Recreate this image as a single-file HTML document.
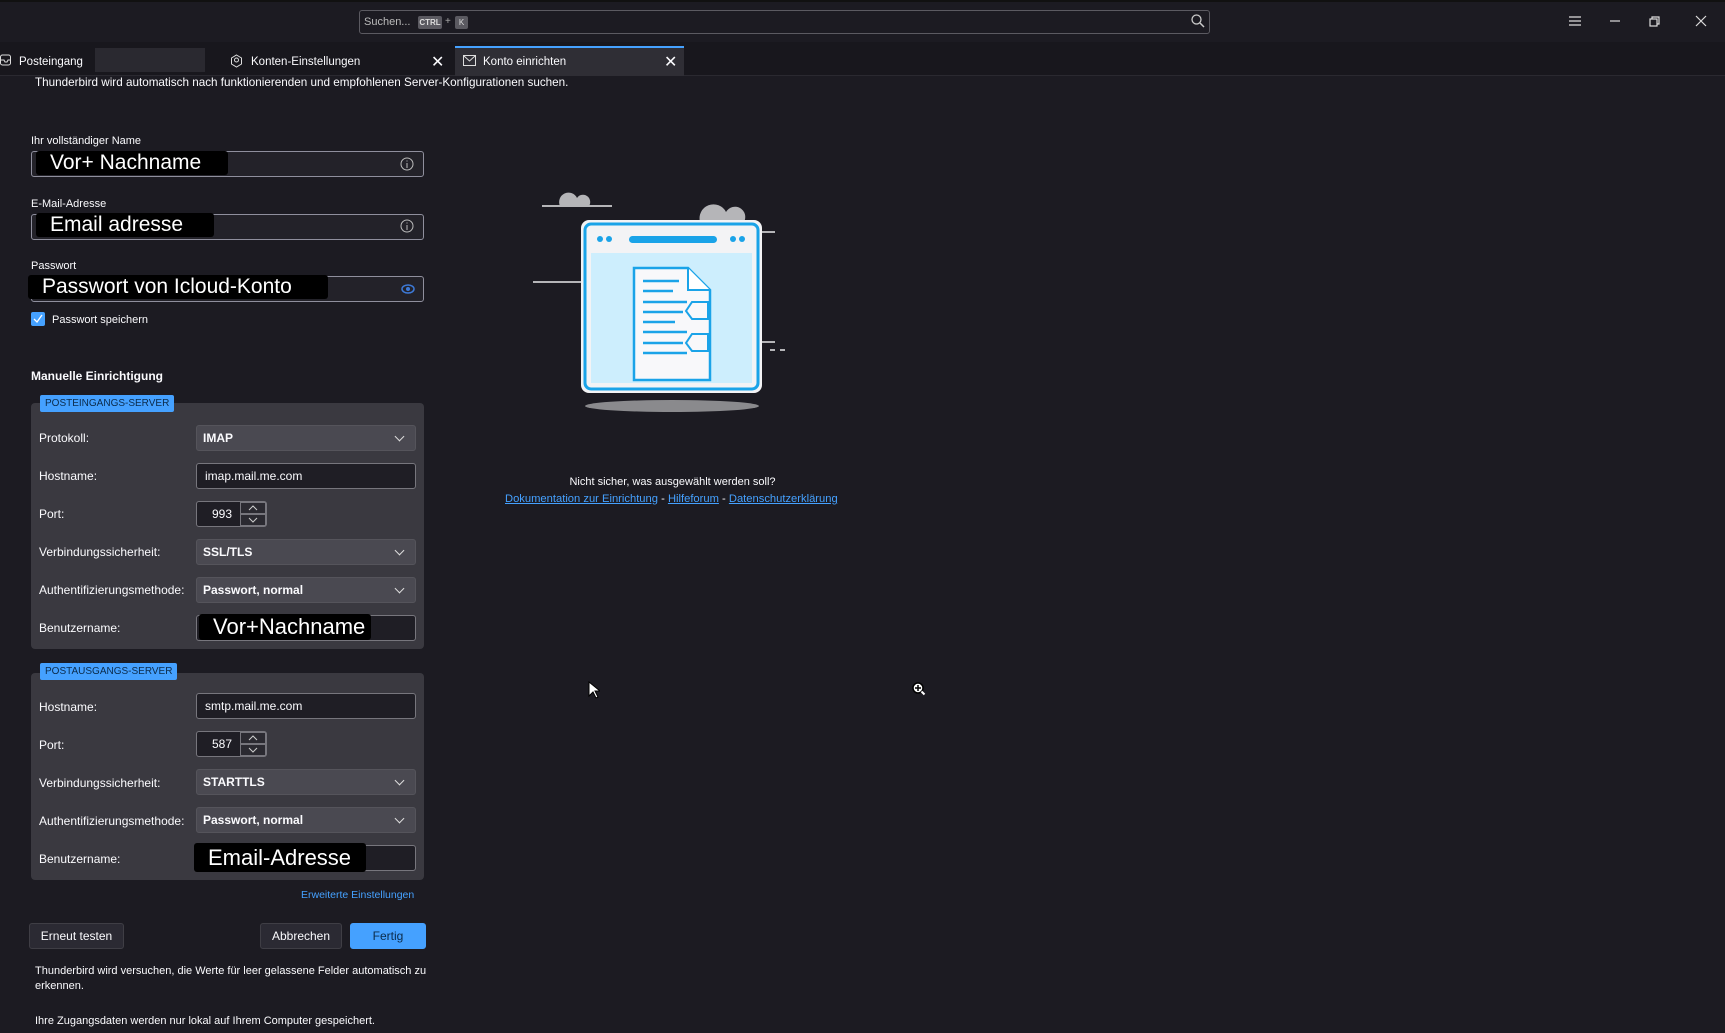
<!DOCTYPE html>
<html><head><meta charset="utf-8"><style>
*{box-sizing:border-box;margin:0;padding:0}
body{width:1725px;height:1033px;background:#1c1b22;color:#fbfbfe;font-family:"Liberation Sans",sans-serif;font-size:12px;position:relative;overflow:hidden}
.a{position:absolute;white-space:nowrap}
.title{left:0;top:0;width:1725px;height:42px;background:#1c1b22;border-top:2px solid #111}
.tabs{left:0;top:42px;width:1725px;height:34px;background:#18171d;border-bottom:1px solid #2a2930}
.lbl{font-size:11px;color:#fbfbfe}
.inp{background:#232229;border:1px solid #8f8f9d;border-radius:3px;height:26px}
.blk{background:#000;color:#fff;font-size:21px;border-radius:3px;padding:0 14px;height:24px;line-height:24px}
.panel{background:#3a3940;border-radius:4px;left:31px;width:393px}
.badge{background:#45a1ff;color:#0b2b4a;font-size:10px;border-radius:2px;height:17px;line-height:17px;padding:0 5px}
.rl{left:39px;font-size:12px;color:#fbfbfe}
.sel{left:196px;width:220px;height:26px;background:#4a4951;border:1px solid #55545b;border-radius:3px;font-size:12px;font-weight:bold;line-height:24px;padding-left:6px}
.sel:after{content:"";position:absolute;right:12px;top:7px;width:6px;height:6px;border-right:1.5px solid #ddd;border-bottom:1.5px solid #ddd;transform:rotate(45deg)}
.tx{left:196px;width:220px;height:26px;background:#1f1e25;border:1px solid #77767d;border-radius:3px;line-height:24px;padding-left:8px;font-size:12px}
.port{left:196px;width:71px;height:26px;background:#1f1e25;border:1px solid #77767d;border-radius:3px;line-height:24px;font-size:12px}
.port span{position:absolute;right:34px}
.port svg{position:absolute;right:0;top:0}
.btn{height:26px;border-radius:3px;background:#2b2a33;border:1px solid #3f3e45;text-align:center;line-height:24px;font-size:12px}
a{color:#45a1ff;text-decoration:underline}
</style></head><body>
<div class="a title"></div>
<div class="a" style="left:359px;top:10px;width:851px;height:24px;border:1px solid #5b5a61;border-radius:3px;background:#1c1b22"></div>
<div class="a" style="left:364px;top:16px;font-size:11px;color:#bbb">Suchen...</div>
<div class="a" style="left:418px;top:16px;width:24px;height:13px;background:#5b5a61;border-radius:2px;font-size:8px;line-height:13px;text-align:center;font-weight:bold;color:#ddd">CTRL</div>
<div class="a" style="left:445px;top:16px;font-size:10px;color:#aaa">+</div>
<div class="a" style="left:455px;top:16px;width:13px;height:13px;background:#5b5a61;border-radius:2px;font-size:8px;line-height:13px;text-align:center;color:#ddd">K</div>
<svg class="a" style="left:1190px;top:13px" width="16" height="16"><circle cx="6.5" cy="6.5" r="4.5" fill="none" stroke="#ccc" stroke-width="1.3"/><line x1="10" y1="10" x2="14" y2="14" stroke="#ccc" stroke-width="1.5"/></svg>
<svg class="a" style="left:1568px;top:14px" width="150" height="16"><g stroke="#ddd" stroke-width="1.2" fill="none"><path d="M1 3h12M1 7h12M1 11h12"/><path d="M42 7h10"/><rect x="82" y="5" width="7" height="7"/><path d="M84 5V3h7v7h-2"/><path d="M128 2l10 10M138 2l-10 10"/></g></svg>
<div class="a tabs"></div>
<svg class="a" style="left:0;top:54px" width="12" height="12"><rect x="0.5" y="1" width="10" height="10" rx="2" fill="none" stroke="#ddd"/><path d="M1 6h3l1 2h2l1-2h3" fill="none" stroke="#ddd"/></svg>
<div class="a" style="left:19px;top:56px;font-size:11.5px">Posteingang</div>
<div class="a" style="left:95px;top:48px;width:110px;height:24px;background:#2a2930"></div>
<svg class="a" style="left:230px;top:54px" width="13" height="14"><path d="M6.5 1l5 3v6l-5 3-5-3V4z" fill="none" stroke="#ddd"/><circle cx="6.5" cy="6" r="2" fill="none" stroke="#ddd"/></svg>
<div class="a" style="left:251px;top:56px;font-size:11.5px">Konten-Einstellungen</div>
<div class="a" style="left:431px;top:52px;font-size:16px">✕</div>
<div class="a" style="left:455px;top:46px;width:229px;height:30px;background:#2f2e35;border-top:2px solid #45a1ff"></div>
<svg class="a" style="left:463px;top:55px" width="13" height="12"><rect x="0.5" y="0.5" width="12" height="10" fill="none" stroke="#ddd"/><path d="M1 1l5.5 5 5.5-5" fill="none" stroke="#ddd"/></svg>
<div class="a" style="left:483px;top:56px;font-size:11.5px">Konto einrichten</div>
<div class="a" style="left:664px;top:52px;font-size:16px">✕</div>
<div class="a" style="left:35px;top:76px;font-size:11.7px">Thunderbird wird automatisch nach funktionierenden und empfohlenen Server-Konfigurationen suchen.</div>

<div class="a lbl" style="left:31px;top:135px">Ihr vollständiger Name</div>
<div class="a inp" style="left:31px;top:151px;width:393px"></div>
<div class="a blk" style="left:36px;top:151px;width:192px">Vor+ Nachname</div>
<svg class="a" style="left:399px;top:156px" width="16" height="16"><circle cx="8" cy="8" r="6" fill="none" stroke="#bbb"/><path d="M8 7v5M8 4.5v1" stroke="#bbb"/></svg>
<div class="a lbl" style="left:31px;top:198px">E-Mail-Adresse</div>
<div class="a inp" style="left:31px;top:214px;width:393px"></div>
<div class="a blk" style="left:36px;top:213px;width:178px">Email adresse</div>
<svg class="a" style="left:399px;top:218px" width="16" height="16"><circle cx="8" cy="8" r="6" fill="none" stroke="#bbb"/><path d="M8 7v5M8 4.5v1" stroke="#bbb"/></svg>
<div class="a lbl" style="left:31px;top:260px">Passwort</div>
<div class="a inp" style="left:31px;top:276px;width:393px"></div>
<div class="a blk" style="left:28px;top:275px;width:300px">Passwort von Icloud-Konto</div>
<svg class="a" style="left:400px;top:283px" width="16" height="12"><ellipse cx="8" cy="6" rx="6" ry="4" fill="none" stroke="#3d7ad8" stroke-width="1.5"/><circle cx="8" cy="6" r="2" fill="#3d7ad8"/></svg>
<div class="a" style="left:31px;top:312px;width:14px;height:14px;background:#45a1ff;border-radius:2px"></div>
<svg class="a" style="left:33px;top:314px" width="10" height="10"><path d="M1 5l3 3 5-7" fill="none" stroke="#fff" stroke-width="1.3"/></svg>
<div class="a" style="left:52px;top:314px;font-size:11px">Passwort speichern</div>
<div class="a" style="left:31px;top:369px;font-size:12px;font-weight:bold">Manuelle Einrichtigung</div>

<div class="a panel" style="top:403px;height:246px"></div>
<div class="a badge" style="left:40px;top:395px">POSTEINGANGS-SERVER</div>
<div class="a rl" style="top:431px">Protokoll:</div><div class="a sel" style="top:425px">IMAP</div>
<div class="a rl" style="top:469px">Hostname:</div><div class="a tx" style="top:463px">imap.mail.me.com</div>
<div class="a rl" style="top:507px">Port:</div><div class="a port" style="top:501px"><span>993</span><svg width="26" height="24"><rect x="0.5" y="0.5" width="25" height="11" fill="#2b2a31" stroke="#77767d"/><rect x="0.5" y="12.5" width="25" height="11" fill="#2b2a31" stroke="#77767d"/><path d="M9 8l4-4 4 4M9 16l4 4 4-4" fill="none" stroke="#ccc"/></svg></div>
<div class="a rl" style="top:545px">Verbindungssicherheit:</div><div class="a sel" style="top:539px">SSL/TLS</div>
<div class="a rl" style="top:583px">Authentifizierungsmethode:</div><div class="a sel" style="top:577px">Passwort, normal</div>
<div class="a rl" style="top:621px">Benutzername:</div><div class="a tx" style="top:615px"></div>
<div class="a blk" style="left:199px;top:614px;width:172px;height:26px;line-height:26px;font-size:22px">Vor+Nachname</div>

<div class="a panel" style="top:673px;height:207px"></div>
<div class="a badge" style="left:40px;top:663px">POSTAUSGANGS-SERVER</div>
<div class="a rl" style="top:700px">Hostname:</div><div class="a tx" style="top:693px">smtp.mail.me.com</div>
<div class="a rl" style="top:738px">Port:</div><div class="a port" style="top:731px"><span>587</span><svg width="26" height="24"><rect x="0.5" y="0.5" width="25" height="11" fill="#2b2a31" stroke="#77767d"/><rect x="0.5" y="12.5" width="25" height="11" fill="#2b2a31" stroke="#77767d"/><path d="M9 8l4-4 4 4M9 16l4 4 4-4" fill="none" stroke="#ccc"/></svg></div>
<div class="a rl" style="top:776px">Verbindungssicherheit:</div><div class="a sel" style="top:769px">STARTTLS</div>
<div class="a rl" style="top:814px">Authentifizierungsmethode:</div><div class="a sel" style="top:807px">Passwort, normal</div>
<div class="a rl" style="top:852px">Benutzername:</div><div class="a tx" style="top:845px"></div>
<div class="a blk" style="left:194px;top:843px;width:172px;height:29px;line-height:29px;font-size:22px">Email-Adresse</div>

<div class="a" style="left:301px;top:889px;font-size:10.5px;color:#45a1ff">Erweiterte Einstellungen</div>
<div class="a btn" style="left:29px;top:923px;width:95px">Erneut testen</div>
<div class="a btn" style="left:260px;top:923px;width:82px">Abbrechen</div>
<div class="a btn" style="left:350px;top:923px;width:76px;background:#45a1ff;border-color:#45a1ff;color:#0b2b4a">Fertig</div>
<div class="a" style="left:35px;top:964px;width:400px;font-size:11px;line-height:15px;white-space:normal">Thunderbird wird versuchen, die Werte für leer gelassene Felder automatisch zu erkennen.</div>
<div class="a" style="left:35px;top:1015px;font-size:11px">Ihre Zugangsdaten werden nur lokal auf Ihrem Computer gespeichert.</div>

<svg class="a" style="left:530px;top:185px" width="300" height="230">
<g fill="#b5b5b8"><path d="M30 21a9 9 0 0 1 17-8a7 7 0 0 1 12 8z"/><path d="M170 37a14 14 0 0 1 26-10a10 10 0 0 1 18 10z"/></g>
<g stroke="#b5b5b8" stroke-width="2"><path d="M12 21h70M205 45h10M220 47h25M3 97h50M230 157h15M240 165h5M250 165h5"/></g>
<ellipse cx="142" cy="221" rx="87" ry="6" fill="#8a8a8d"/>
<rect x="51" y="35" width="181" height="173" rx="8" fill="#f3f3f5"/>
<rect x="55" y="39" width="173" height="165" rx="6" fill="none" stroke="#1aa3e8" stroke-width="3"/>
<rect x="61" y="68" width="161" height="130" fill="#cdeefd"/>
<circle cx="70" cy="54" r="3" fill="#1aa3e8"/><circle cx="79" cy="54" r="3" fill="#1aa3e8"/>
<rect x="99" y="51" width="88" height="7" rx="3.5" fill="#1aa3e8"/>
<circle cx="203" cy="54" r="3" fill="#1aa3e8"/><circle cx="212" cy="54" r="3" fill="#1aa3e8"/>
<path d="M104 83h54l22 22v90h-76z" fill="#f8f8fa" stroke="#1aa3e8" stroke-width="2.5"/>
<path d="M158 83v22h22" fill="#fff" stroke="#1aa3e8" stroke-width="2"/>
<g stroke="#1aa3e8" stroke-width="2.5"><path d="M113 96h36M113 106h30M113 117h44M113 127h40M113 137h32M113 147h44M113 158h40M113 168h44"/></g>
<path d="M162 117h16v17h-16l-6-8z" fill="#f8f8fa" stroke="#1aa3e8" stroke-width="2"/>
<path d="M162 149h16v17h-16l-6-8z" fill="#f8f8fa" stroke="#1aa3e8" stroke-width="2"/>
</svg>
<div class="a" style="left:500px;top:476px;width:345px;text-align:center;font-size:11px">Nicht sicher, was ausgewählt werden soll?</div>
<div class="a" style="left:505px;top:493px;font-size:11.2px"><a>Dokumentation zur Einrichtung</a> - <a>Hilfeforum</a> - <a>Datenschutzerklärung</a></div>
<svg class="a" style="left:588px;top:681px" width="12" height="18"><path d="M1 1v14l4-4 3 6 2-1-3-6h5z" fill="#fff" stroke="#000"/></svg>
<svg class="a" style="left:912px;top:682px" width="14" height="14"><circle cx="6" cy="6" r="5" fill="#fff" stroke="#000" stroke-width="1.5"/><path d="M6 3v6M3 6h6" stroke="#000" stroke-width="1.5"/><path d="M9.5 9.5l3 3" stroke="#fff" stroke-width="2"/></svg>
</body></html>
